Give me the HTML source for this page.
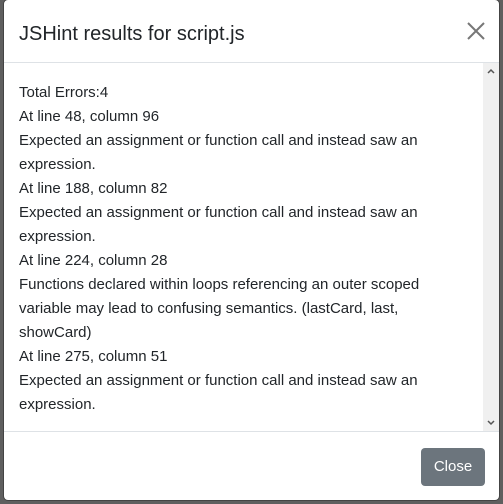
<!DOCTYPE html>
<html><head><style>
html,body{margin:0;padding:0;width:503px;height:504px;overflow:hidden;background:#5f5f5f;font-family:"Liberation Sans",sans-serif;}
.m{position:absolute;left:3px;top:-1px;width:497px;height:502px;background:#fff;border-radius:5px;border:1px solid #444;box-sizing:border-box}
.h{position:absolute;left:0;top:0;width:100%;height:62px;border-bottom:1px solid #dee2e6}
.t{position:absolute;left:15px;top:23px;font-size:20px;color:#212529}
.x{position:absolute;right:12px;top:20px;width:22px;height:22px}
.b{position:absolute;left:0;top:63px;width:495px;height:368px;overflow:hidden}
.tx{position:absolute;left:15px;top:18px;width:440px;font-size:15px;line-height:24px;color:#212529}
.sb{position:absolute;right:0;top:0;width:16px;height:368px;background:#f0f0f0}
.f{position:absolute;left:0;top:431px;width:100%;border-top:1px solid #dee2e6;height:68px}
.btn{position:absolute;left:417px;top:16px;width:64px;height:38px;background:#6c757d;border-radius:4px;color:#fff;font-size:15px;line-height:38px;text-align:center}
</style></head><body>
<div class="m">
<div class="h"><div class="t">JSHint results for script.js</div>
<svg class="x" viewBox="0 0 22 22"><path d="M3 3L19 19M19 3L3 19" stroke="#777" stroke-width="2"/></svg></div>
<div class="b"><div class="tx">Total Errors:4<br>At line 48, column 96<br>Expected an assignment or function call and instead saw an expression.<br>At line 188, column 82<br>Expected an assignment or function call and instead saw an expression.<br>At line 224, column 28<br>Functions declared within loops referencing an outer scoped variable may lead to confusing semantics. (lastCard, last, showCard)<br>At line 275, column 51<br>Expected an assignment or function call and instead saw an expression.</div>
<div class="sb"><svg width="16" height="368"><path d="M5 10L8 7L11 10" stroke="#555" stroke-width="1.5" fill="none"/><path d="M5 358L8 361L11 358" stroke="#555" stroke-width="1.5" fill="none"/></svg></div></div>
<div class="f"><div class="btn">Close</div></div>
</div>
</body></html>
